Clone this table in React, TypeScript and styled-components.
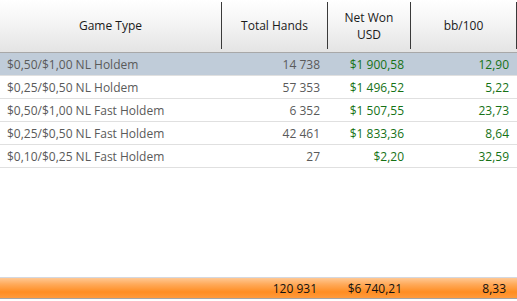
import React from 'react';
import styled, { createGlobalStyle } from 'styled-components';

const GlobalStyle = createGlobalStyle`
  html, body {
    margin: 0;
    padding: 0;
    background: #fff;
  }
  body {
    font-family: 'Open Sans', 'Noto Sans', sans-serif;
  }
`;

const COLUMNS = '222px 106px 83px 106px';

interface Row {
  game: string;
  hands: string;
  won: string;
  bb: string;
}

const rows: Row[] = [
  { game: '$0,50/$1,00 NL Holdem', hands: '14 738', won: '$1 900,58', bb: '12,90' },
  { game: '$0,25/$0,50 NL Holdem', hands: '57 353', won: '$1 496,52', bb: '5,22' },
  { game: '$0,50/$1,00 NL Fast Holdem', hands: '6 352', won: '$1 507,55', bb: '23,73' },
  { game: '$0,25/$0,50 NL Fast Holdem', hands: '42 461', won: '$1 833,36', bb: '8,64' },
  { game: '$0,10/$0,25 NL Fast Holdem', hands: '27', won: '$2,20', bb: '32,59' },
];

const Page = styled.div`
  width: 517px;
  height: 301px;
  display: flex;
  flex-direction: column;
  font-size: 12px;
  overflow: hidden;
`;

const Header = styled.div`
  display: grid;
  grid-template-columns: ${COLUMNS};
  height: 53px;
  padding: 2px 0 3px;
  box-sizing: border-box;
  background: linear-gradient(#ffffff 0%, #f4f4f4 45%, #e4e4e4 100%);
  border-bottom: 1px solid #a8a8a8;
`;

const HeaderCell = styled.div`
  display: flex;
  align-items: center;
  justify-content: center;
  text-align: center;
  line-height: 17px;
  color: #1a1a1a;
  border-right: 1px solid #3a3a3a;
`;

const Body = styled.div`
  flex: 1;
  display: flex;
  flex-direction: column;
`;

const DataRow = styled.div<{ $selected?: boolean }>`
  display: grid;
  grid-template-columns: ${COLUMNS};
  height: 22px;
  border-bottom: 1px solid #e0e0e0;
  background: ${(p) => (p.$selected ? '#c0ccd9' : '#ffffff')};
`;

const Cell = styled.div<{ $align?: 'left' | 'right'; $color?: string; $pad?: number }>`
  display: flex;
  align-items: center;
  justify-content: ${(p) => (p.$align === 'right' ? 'flex-end' : 'flex-start')};
  padding: ${(p) => (p.$align === 'right' ? `0 ${p.$pad ?? 8}px 0 0` : '0 0 0 7px')};
  color: ${(p) => p.$color ?? '#5a5a5a'};
  white-space: nowrap;
`;

const Footer = styled.div`
  display: grid;
  grid-template-columns: ${COLUMNS};
  height: 20px;
  border-top: 1px solid #d4d8e0;
  border-bottom: 1px solid #a4a4a4;
  margin-bottom: 2px;
  background: linear-gradient(#ffc894 0%, #ffab5c 30%, #ff8d22 70%, #ff9a3c 100%);
`;

const GREEN = '#167216';

export default function App() {
  return (
    <>
      <GlobalStyle />
      <Page>
        <Header>
          <HeaderCell>Game Type</HeaderCell>
          <HeaderCell>Total Hands</HeaderCell>
          <HeaderCell>
            Net Won
            <br />
            USD
          </HeaderCell>
          <HeaderCell>bb/100</HeaderCell>
        </Header>
        <Body>
          {rows.map((r, i) => (
            <DataRow key={r.game} $selected={i === 0}>
              <Cell>{r.game}</Cell>
              <Cell $align="right">{r.hands}</Cell>
              <Cell $align="right" $color={GREEN} $pad={7}>
                {r.won}
              </Cell>
              <Cell $align="right" $color={GREEN}>
                {r.bb}
              </Cell>
            </DataRow>
          ))}
        </Body>
        <Footer>
          <Cell />
          <Cell $align="right" $color="#111" $pad={11}>
            120 931
          </Cell>
          <Cell $align="right" $color="#111" $pad={9}>
            $6 740,21
          </Cell>
          <Cell $align="right" $color="#111" $pad={11}>
            8,33
          </Cell>
        </Footer>
      </Page>
    </>
  );
}
